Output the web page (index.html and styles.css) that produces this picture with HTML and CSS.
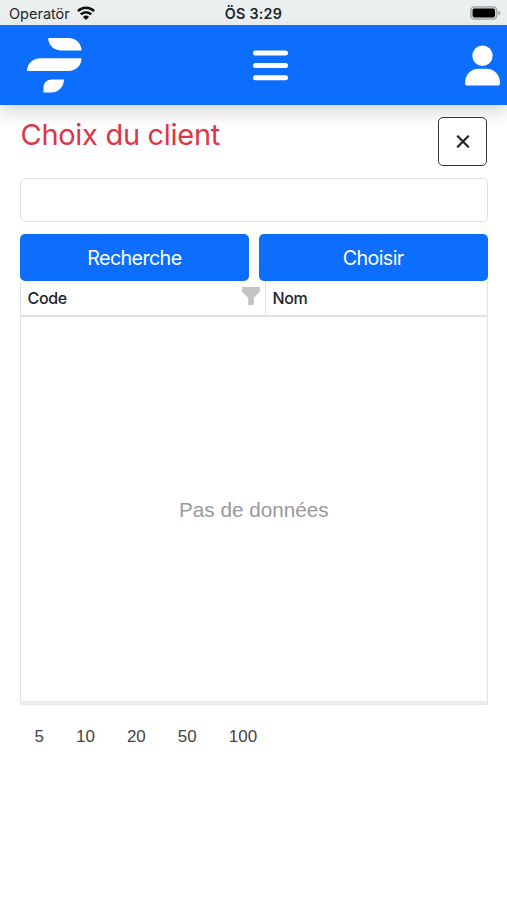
FILE: index.html
```html
<!DOCTYPE html>
<html lang="fr">
<head>
<meta charset="utf-8">
<title>Choix du client</title>
<link rel="stylesheet" href="styles.css">
</head>
<body>
<div class="status">
  <div class="carrier"><span class="carrier-name">Operatör</span>
    <svg class="wifi" width="18" height="14" viewBox="0 0 18 14" fill="none" stroke="#111" stroke-width="2.6"><path d="M.9 5.1a11.6 11.6 0 0 1 16.2 0M3.8 8.4a7.400 7.400 0 0 1 10.400 0"/><path d="M9 14 5.900 10.900a4.400 4.400 0 0 1 6.200 0z" fill="#111" stroke="none"/></svg>
  </div>
  <div class="clock">ÖS 3:29</div>
  <svg class="battery" width="31" height="14" viewBox="0 0 31 14"><rect x=".8" y=".8" width="26" height="12.4" rx="3.6" fill="#d5d7d7" stroke="#a0a3a3" stroke-width="1.3"/><rect x="2.6" y="2.6" width="22.4" height="8.8" rx="1.8" fill="#000"/><path d="M28.3 4.4q2 .9 2 2.6t-2 2.6z" fill="#a0a3a3"/></svg>
</div>
<header class="navbar">
  <svg class="logo" width="55" height="55" viewBox="0 0 55 55" fill="#fff"><path d="M21.200 0H41.500C49 0 54.500 5.500 54.500 12.600H34.500C27 12.600 21.200 7 21.200 0z"/><path d="M0 33C0 26 5.500 20.300 13.500 20.300H54.500C54.500 27.500 49 33 41.500 33z"/><path d="M16.500 54.600V49.500C16.500 44.500 20 41.500 25 41.500H37C37 48.500 31.500 54.600 24 54.600z"/></svg>
  <svg class="menu" width="35" height="31" viewBox="0 0 35 31" stroke="#fff" stroke-width="5" stroke-linecap="round"><path d="M2.500 3.100h30M2.500 15.400h30M2.500 27.700h30"/></svg>
  <svg class="user" width="35" height="41" viewBox="0 0 35 41" fill="#fff"><circle cx="17.500" cy="10.800" r="10.200"/><path d="M0 38C0 29.500 6 23.800 13.500 23.800H21.500C29 23.800 35 29.500 35 38Q35 40.600 32.500 40.600H2.500Q0 40.600 0 38z"/></svg>
</header>
<main class="content">
  <div class="heading">
    <h1>Choix du client</h1>
    <button class="close" aria-label="Fermer"><svg width="14" height="14" viewBox="0 0 14 14" stroke="#212529" stroke-width="2.200" stroke-linecap="round"><path d="M1.800 1.300l10.400 10.400M12.200 1.300L1.800 11.700"/></svg></button>
  </div>
  <input class="search" type="text" aria-label="Client">
  <div class="actions">
    <button class="primary">Recherche</button>
    <button class="primary">Choisir</button>
  </div>
  <section class="grid">
    <div class="grid-head">
      <div class="cell first"><span>Code</span><svg width="18" height="19" viewBox="0 0 18 19" fill="#c4c4c4"><path d="M0 0h18v4.500L11.800 11v7H6.200V11L0 4.500z"/></svg></div>
      <div class="cell"><span>Nom</span></div>
    </div>
    <div class="grid-body"><span>Pas de données</span></div>
  </section>
  <nav class="sizes"><span>5</span><span>10</span><span>20</span><span>50</span><span>100</span></nav>
</main>
</body>
</html>
```

FILE: styles.css
```css
* { box-sizing: border-box; }
body { margin: 0; height: 900px; background: #fff; color: #212529; font-family: Inter, "Liberation Sans", sans-serif; overflow: hidden; }
svg { display: block; flex: none; }
.status { height: 25px; background: #ebefef; display: grid; grid-template-columns: 1fr auto 1fr; align-items: center; padding: 2px 6px 0 9px; }
.carrier { display: flex; align-items: center; gap: 6px; font-size: 14.500px; line-height: 20px; }
.carrier-name { width: 62px; white-space: nowrap; }
.wifi { margin-top: -2px; }
.clock { font-size: 14.300px; font-weight: 600; line-height: 20px; letter-spacing: .25px; margin-left: -3px; }
.battery { justify-self: end; margin-top: -2px; }
.navbar { height: 80px; background: #0d6efd; display: grid; grid-template-columns: 1fr auto 1fr; align-items: center; padding: 0 7px 0 27px; box-shadow: 0 8px 16px rgba(0, 0, 0, .15); }
.menu { position: relative; left: 7px; }
.user { justify-self: end; }
.content { padding: 12px 19.500px 0 20px; }
.heading { display: flex; justify-content: space-between; height: 61px; }
h1 { margin: 0 0 0 .5px; font-size: 29px; font-weight: 400; line-height: 36px; color: #dc3545; letter-spacing: -.3px; white-space: nowrap; }
.close { width: 49px; height: 49px; margin-right: .5px; padding: 0; display: flex; align-items: center; justify-content: center; background: #fff; border: 1px solid #303437; border-radius: 5px; }
.search { display: block; width: 100%; height: 44px; border: 1px solid #e0e0e0; border-radius: 5px; background: #fff; }
.actions { display: grid; grid-template-columns: 1fr 1fr; gap: 10px; margin-top: 12px; }
.primary { height: 47px; border: 0; border-radius: 5px; background: #0d6efd; color: #fff; font: 400 19.700px/47px Inter, sans-serif; letter-spacing: -.6px; padding: 1px 0 0; }
.grid { border: 1px solid #e2e2e2; border-top: 0; border-bottom: 4px solid #ececec; height: 424px; }
.grid-head { height: 36px; display: grid; grid-template-columns: 245px 1fr; border-bottom: 2px solid #e2e2e2; }
.cell { display: flex; justify-content: space-between; padding: 6px 5px 0 6.500px; font: 450 16px/23px Inter, sans-serif; letter-spacing: -.35px; }
.first { border-right: 1px solid #e2e2e2; }
.grid-body { height: 384px; padding-top: 2px; display: flex; align-items: center; justify-content: center; color: #999; font: 20.700px/26px "Liberation Sans", sans-serif; }
.sizes { display: flex; gap: 32px; padding: 21px 0 0 14.500px; font: 17px/22px "Liberation Sans", sans-serif; color: #444; }
```
